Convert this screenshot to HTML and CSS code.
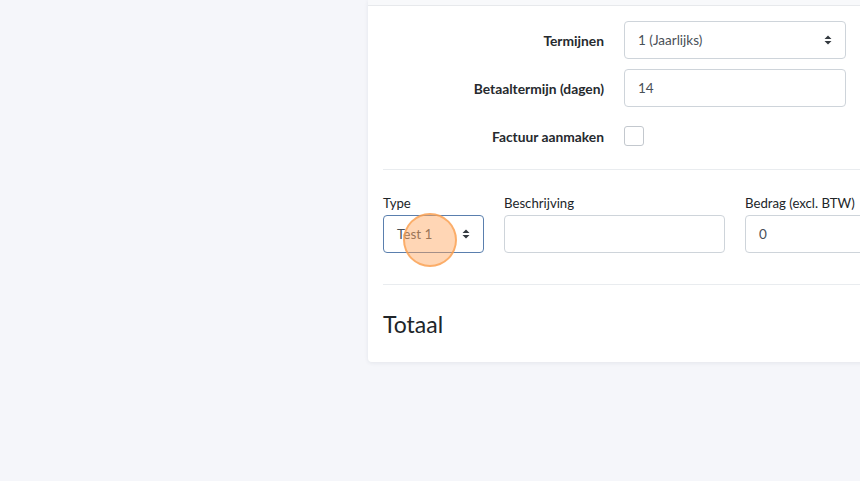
FILE: index.html
```html
<!DOCTYPE html>
<html lang="nl">
<head>
<meta charset="utf-8">
<link rel="stylesheet" href="styles.css">
</head>
<body>
<div class="page">
  <div class="card">
    <div class="card-header"></div>
    <div class="card-body">
      <div class="settings">
        <div class="row">
          <label class="row-label">Termijnen</label>
          <div class="select">
            <span>1 (Jaarlijks)</span>
            <svg class="arrows" width="8" height="10" viewBox="0 0 8 10"><path d="M4 0.5 L7.5 4 H0.5 Z M4 9.5 L7.5 6 H0.5 Z" fill="#343a40"/></svg>
          </div>
        </div>
        <div class="row">
          <label class="row-label">Betaaltermijn (dagen)</label>
          <div class="input"><span>14</span></div>
        </div>
        <div class="row">
          <label class="row-label">Factuur aanmaken</label>
          <div class="checkbox"></div>
        </div>
      </div>
      <hr class="sep">
      <div class="lines">
        <div class="field f-type">
          <label class="field-label">Type</label>
          <div class="select focused">
            <span>Test 1</span>
            <svg class="arrows" width="8" height="10" viewBox="0 0 8 10"><path d="M4 0.5 L7.5 4 H0.5 Z M4 9.5 L7.5 6 H0.5 Z" fill="#343a40"/></svg>
            <div class="cursor"></div>
          </div>
        </div>
        <div class="field f-desc">
          <label class="field-label">Beschrijving</label>
          <div class="input"></div>
        </div>
        <div class="field f-amount">
          <label class="field-label">Bedrag (excl. BTW)</label>
          <div class="input"><span>0</span></div>
        </div>
      </div>
      <hr class="sep sep2">
      <h3 class="total">Totaal</h3>
    </div>
  </div>
</div>
</body>
</html>
```

FILE: styles.css
```css
html, body {
  margin: 0;
  padding: 0;
  background: #f5f6fa;
  overflow: hidden;
  height: 481px;
  font-family: "Source Sans Pro", Lato, "Open Sans", sans-serif;
  color: #212529;
}
.page {
  padding-left: 368px;
  width: 1000px;
}
.card {
  width: 560px;
  background: #fff;
  border-radius: 0 0 4px 4px;
  box-shadow: 0 1px 4px rgba(30, 40, 70, 0.08);
}
.card-header {
  height: 5px;
  background: #f8f9fb;
  border-bottom: 1px solid #e7e9ec;
}
.card-body {
  padding: 15px 0 23px 15px;
}
.settings {
  display: flex;
  flex-direction: column;
  gap: 10px;
}
.row {
  display: grid;
  grid-template-columns: 221px 222px;
  column-gap: 20px;
  align-items: center;
  height: 38px;
}
.row-label {
  text-align: right;
  font-weight: 700;
  font-size: 13.8px;
  color: #262a2e;
}
.select, .input {
  position: relative;
  box-sizing: border-box;
  height: 38px;
  border: 1px solid #ced4da;
  border-radius: 4px;
  background: #fff;
  display: flex;
  align-items: center;
  padding: 0 13px;
  font-size: 13.5px;
  color: #495057;
}
.select span, .input span {
  flex: 1;
}
.arrows {
  display: block;
}
.select.focused {
  border-color: #5a7fae;
}
.checkbox {
  width: 20px;
  height: 20px;
  box-sizing: border-box;
  border: 1px solid #c3c8ce;
  border-radius: 3px;
  background: #fff;
}
.sep {
  border: 0;
  border-top: 1px solid #e9ecef;
  margin: 14px 0 0 0;
  height: 0;
}
.lines {
  display: grid;
  grid-template-columns: 101px 221px 221px;
  column-gap: 20px;
  margin-top: 23px;
}
.field-label {
  display: block;
  font-size: 13.2px;
  line-height: 20px;
  color: #212529;
  margin-bottom: 2px;
}
.f-amount .input {
  width: 140px;
}
.cursor {
  position: absolute;
  left: 19px;
  top: -3px;
  width: 50px;
  height: 50px;
  border-radius: 50%;
  background: rgba(255, 165, 90, 0.45);
  border: 2px solid rgba(250, 160, 80, 0.75);
}
.sep2 {
  margin-top: 31px;
}
.total {
  margin: 24px 0 0 0;
  font-size: 23px;
  line-height: 30px;
  font-weight: 400;
  color: #212529;
}
```
